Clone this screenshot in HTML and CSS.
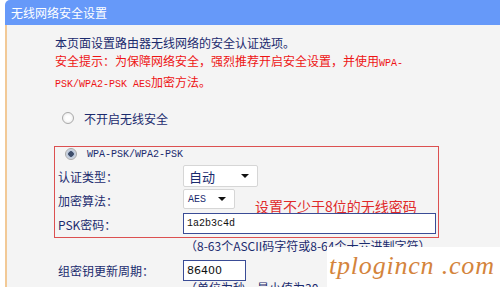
FILE: index.html
```html
<!DOCTYPE html>
<html lang="zh-CN">
<head>
  <meta charset="UTF-8">
  <title>无线网络安全设置</title>
  <meta name="viewport" content="width=device-width, initial-scale=1.0">
  <link rel="stylesheet" href="styles.css">
</head>
<body>

  <div class="page">
    <div class="title">无线网络安全设置</div>

    <div class="panel">
      <div class="intro">
        <div>本页面设置路由器无线网络的安全认证选项。</div>
        <div class="warn">安全提示：为保障网络安全，强烈推荐开启安全设置，并使用<span class="mono">WPA-</span></div>
        <div class="warn"><span class="mono">PSK/WPA2-PSK AES</span>加密方法。</div>
      </div>

      <div class="radio-row">
        <span class="radio"></span>
        <span>不开启无线安全</span>
      </div>

      <div class="wpa-box">
        <div class="radio-row inner">
          <span class="radio checked"></span>
          <span class="mono">WPA-PSK/WPA2-PSK</span>
        </div>

        <div class="form-grid">
          <div class="label">认证类型：</div>
          <div class="control">
            <div class="select select-auth">
              <span>自动</span>
              <span class="arrow"></span>
            </div>
          </div>

          <div class="label">加密算法：</div>
          <div class="control">
            <div class="select select-alg">
              <span class="mono">AES</span>
              <span class="arrow"></span>
            </div>
            <div class="note">设置不少于8位的无线密码</div>
          </div>

          <div class="label">PSK密码：</div>
          <div class="control">
            <div class="text-input psk mono">1a2b3c4d</div>
          </div>
        </div>
      </div>

      <div class="hint">（8-63个ASCII码字符或8-64个十六进制字符）</div>

      <div class="field-row">
        <div class="label">组密钥更新周期：</div>
        <div class="text-input period">86400</div>
      </div>

      <div class="hint unit">（单位为秒，最小值为30</div>
    </div>

    <div class="watermark">tplogincn .com</div>
  </div>

</body>
</html>
```

FILE: styles.css
```css
* { box-sizing: border-box; }

body {
  margin: 0;
  background-color: white;
  color: #1b2b6e;
  font-family: "Noto Sans CJK SC", "DejaVu Sans", sans-serif;
  font-size: 12px;
  overflow: hidden;
}

.page {
  position: relative;
  width: 500px;
  height: 287px;
  overflow: hidden;
}

.title {
  margin-left: 5px;
  height: 25px;
  line-height: 25px;
  padding-left: 6px;
  background-color: #6699f9;
  border-top-left-radius: 5px;
  color: white;
  font-size: 12px;
}

.panel {
  margin-left: 5px;
  height: 262px;
  border-left: 2px solid #f2c996;
  background-color: #f4f4f4;
  padding: 9px 0 0 47px;
}

.mono {
  font-family: "Liberation Mono", monospace;
  font-size: 10px;
}

.intro {
  padding-left: 1px;
  line-height: 18px;
}

.warn {
  color: #ee1515;
}

.radio-row {
  display: flex;
  align-items: center;
  gap: 10px;
  height: 18px;
  margin-top: 15px;
  padding-left: 8px;
}

.radio-row.inner {
  height: 14px;
  margin-top: 0;
  padding-left: 7px;
}

.radio {
  width: 12px;
  height: 12px;
  border-radius: 50%;
  border: 1px solid #a9a9a9;
  background: radial-gradient(circle, #ffffff 30%, #e4e4e4 100%);
}

.radio.checked {
  background: radial-gradient(circle, #3d4d6a 0, #3d4d6a 2.5px, #b7c4d8 3px, #f0f0f0 100%);
}

.wpa-box {
  width: 385px;
  margin-top: 19px;
  border: 1px solid #dc5050;
  padding: 0 0 2px 3px;
}

.form-grid {
  display: grid;
  grid-template-columns: 125px 1fr;
  grid-auto-rows: 22px;
  row-gap: 2px;
  margin-top: 4px;
}

.label {
  display: flex;
  align-items: center;
}

.control {
  display: flex;
  align-items: flex-start;
}

.select {
  display: flex;
  align-items: center;
  justify-content: space-between;
  background-color: white;
  border: 1px solid #d6d6d6;
  border-radius: 2px;
}

.select-auth {
  width: 75px;
  height: 22px;
  padding: 0 8px 0 5px;
  font-size: 13px;
}

.select-alg {
  width: 52px;
  height: 20px;
  padding: 0 8px 0 4px;
}

.arrow {
  width: 0;
  height: 0;
  border-left: 4px solid transparent;
  border-right: 4px solid transparent;
  border-top: 4px solid #111;
}

.note {
  margin-left: 20px;
  padding-top: 9px;
  line-height: 16px;
  color: #e02a2a;
  font-size: 14px;
}

.text-input {
  display: flex;
  align-items: center;
  background-color: white;
  border: 1px solid #3a4c96;
  padding-left: 3px;
  color: #111;
}

.psk {
  width: 253px;
  height: 21px;
}

.hint {
  padding-left: 131px;
  line-height: 16px;
}

.unit {
  line-height: 14px;
}

.field-row {
  display: grid;
  grid-template-columns: 125px auto;
  align-items: center;
  margin-top: 6px;
  padding-left: 4px;
}

.period {
  width: 63px;
  height: 21px;
  font-size: 11px;
  font-family: "DejaVu Sans", sans-serif;
}

.watermark {
  position: absolute;
  right: 0;
  bottom: 0;
  width: 173px;
  height: 40px;
  padding-left: 2px;
  background-color: white;
  color: #d4843c;
  font-family: "Liberation Serif", serif;
  font-style: italic;
  font-size: 26px;
  letter-spacing: 0.8px;
  line-height: 38px;
  white-space: nowrap;
}
```
